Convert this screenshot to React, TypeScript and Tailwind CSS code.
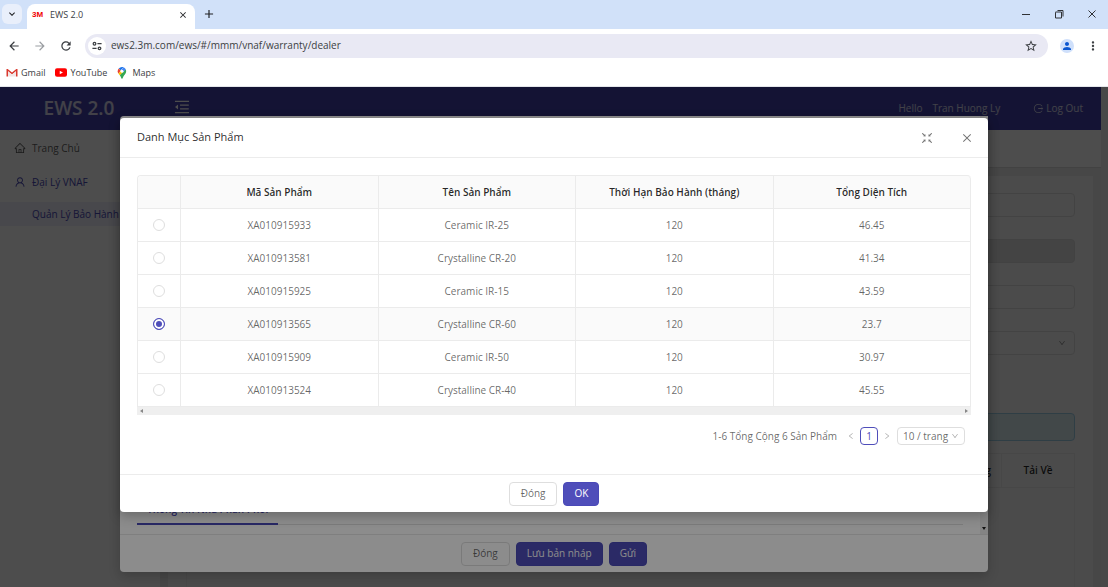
import React from "react";
import {
  AiOutlineHome,
  AiOutlineUser,
  AiOutlineMenuFold,
  AiOutlineLogout,
  AiOutlineClose,
  AiOutlineDown,
  AiOutlineLeft,
  AiOutlineRight,
  AiOutlineFullscreenExit,
} from "react-icons/ai";
import {
  MdArrowBack,
  MdArrowForward,
  MdRefresh,
  MdStarBorder,
  MdMoreVert,
  MdPerson,
  MdClose,
  MdAdd,
  MdKeyboardArrowDown,
} from "react-icons/md";

type Product = {
  code: string;
  name: string;
  months: number;
  area: string;
};

const products: Product[] = [
  { code: "XA010915933", name: "Ceramic IR-25", months: 120, area: "46.45" },
  { code: "XA010913581", name: "Crystalline CR-20", months: 120, area: "41.34" },
  { code: "XA010915925", name: "Ceramic IR-15", months: 120, area: "43.59" },
  { code: "XA010913565", name: "Crystalline CR-60", months: 120, area: "23.7" },
  { code: "XA010915909", name: "Ceramic IR-50", months: 120, area: "30.97" },
  { code: "XA010913524", name: "Crystalline CR-40", months: 120, area: "45.55" },
];

const headers = ["Mã Sản Phẩm", "Tên Sản Phẩm", "Thời Hạn Bảo Hành (tháng)", "Tổng Diện Tích"];

function GmailLogo() {
  return (
    <svg viewBox="0 0 12 9" className="h-[9px] w-3">
      <path d="M.5 8.500V1h1.200L6 4.600 10.300 1h1.200v7.500H10V3.200L6 6.500 2 3.200v5.300Z" fill="#d93a30" />
      <path d="M2 3.200 6 6.500l4-3.300v5.300H2Z" fill="#f1e6e6" />
    </svg>
  );
}

function YouTubeLogo() {
  return (
    <svg viewBox="0 0 24 17" className="h-[9px] w-3">
      <rect width="24" height="17" rx="4" fill="#ff0000" />
      <path d="M9.500 4.800v7.400l6.400-3.700Z" fill="#fff" />
    </svg>
  );
}

function MapsLogo() {
  return (
    <svg viewBox="0 0 20 26" className="h-3 w-2.5">
      <path d="M10 0a9 9 0 0 0-7 3.300L7 7l6.500-6.300A9 9 0 0 0 10 0Z" fill="#1a73e8" />
      <path d="M3 3.300A9 9 0 0 0 2.300 14L7.500 8Z" fill="#ea4335" />
      <path d="M13.500.7 7.500 8l5.300 4.300L18.300 5.500A9 9 0 0 0 13.500.7Z" fill="#4285f4" />
      <path d="M2.300 14c.8 1.700 2 2.800 3 4.100L12.800 12 7.300 8Z" fill="#fbbc04" />
      <path d="M18.300 5.500 5.300 18.100C8 21.300 8.500 26 10 26s2-4.500 4.700-7.900C16.700 15.600 19 13 19 9a9 9 0 0 0-.7-3.500Z" fill="#34a853" />
      <circle cx="10" cy="9" r="3.300" fill="#fff" />
    </svg>
  );
}

function SiteSettingsIcon() {
  return (
    <svg viewBox="0 0 12 12" className="size-2.5" fill="none" stroke="#3c3f43" strokeWidth="1.500">
      <circle cx="3" cy="3.200" r="1.600" />
      <path d="M6.500 3.200H11.500M.5 8.800H5.500" />
      <circle cx="9" cy="8.800" r="1.600" />
    </svg>
  );
}

function BrowserChrome() {
  return (
    <div className="shrink-0 bg-white text-[10px] text-[#3c4043]">
      <div className="flex h-[29px] items-end bg-[#d1e1f9] pl-[2px]">
        <button aria-label="Tìm kiếm thẻ" className="mb-[5px] flex size-5 items-center justify-center rounded-md bg-[#e9effb] text-[#202124]">
          <MdKeyboardArrowDown className="size-3" />
        </button>
        <div className="ml-[5px] flex h-[25px] w-[168px] items-center rounded-t-lg bg-white pr-[7px] pb-[4px] pl-[5px]">
          <span className="w-[18px] font-['Liberation_Sans'] text-[8px] font-bold text-[#f00000]">3M</span>
          <span className="flex-1 text-[9px]">EWS 2.0</span>
          <button aria-label="Đóng thẻ">
            <MdClose className="size-2.5 text-[#202124]" />
          </button>
        </div>
        <button aria-label="Thẻ mới" className="mb-[8px] ml-[7px] text-[#202124]">
          <MdAdd className="size-3.5" />
        </button>
        <div className="mr-[11px] mb-[10px] ml-auto flex items-center gap-[23px] text-[#303236]">
          <button aria-label="Thu nhỏ">
            <svg viewBox="0 0 10 10" className="size-2.5" stroke="currentColor"><path d="M1 5.500H9" /></svg>
          </button>
          <button aria-label="Khôi phục">
            <svg viewBox="0 0 10 10" className="size-2.5" fill="none" stroke="currentColor"><path d="M1.500 3.500V9h6V3H1.500ZM3.500 1.500H9V7.500" /></svg>
          </button>
          <button aria-label="Đóng cửa sổ">
            <svg viewBox="0 0 10 10" className="size-2.5" stroke="currentColor"><path d="m1.500 1.500 7 7m0-7-7 7" /></svg>
          </button>
        </div>
      </div>
      <div className="flex h-[33px] items-center pr-2 pl-[7px] text-[#3c3f43]">
        <button aria-label="Quay lại"><MdArrowBack className="size-3.5" /></button>
        <button aria-label="Tiếp theo" className="ml-3 text-[#9a9da1]"><MdArrowForward className="size-3.5" /></button>
        <button aria-label="Tải lại" className="ml-3"><MdRefresh className="size-3.5" /></button>
        <div className="ml-3 flex h-6 flex-1 items-center rounded-full bg-[#e9e9f4] pr-[10px] pl-[3px]">
          <span className="flex size-[18px] items-center justify-center rounded-full bg-white"><SiteSettingsIcon /></span>
          <input
            aria-label="Địa chỉ"
            defaultValue="ews2.3m.com/ews/#/mmm/vnaf/warranty/dealer"
            className="ml-[5px] flex-1 bg-transparent text-[10px] text-[#3c3f43] outline-none"
          />
          <button aria-label="Đánh dấu trang"><MdStarBorder className="size-3.5" /></button>
        </div>
        <button aria-label="Hồ sơ" className="ml-3 flex size-[14px] items-center justify-center rounded-full bg-[#cfe0fb] text-[#0b57d0]">
          <MdPerson className="size-3" />
        </button>
        <button aria-label="Trình đơn" className="ml-3"><MdMoreVert className="size-3.5" /></button>
      </div>
      <nav className="flex h-[25px] items-center gap-[10px] border-b border-[#e4e6ea] pb-[3px] pl-[6px] text-[9px]">
        <a href="#gmail" className="flex items-center gap-[3px]"><GmailLogo />Gmail</a>
        <a href="#youtube" className="flex items-center gap-[3px]"><YouTubeLogo />YouTube</a>
        <a href="#maps" className="flex items-center gap-[5px]"><MapsLogo />Maps</a>
      </nav>
    </div>
  );
}

function Sidebar() {
  return (
    <nav className="w-40 shrink-0 bg-white text-[10px]">
      <a href="#home" className="flex h-9 items-center gap-[6px] pl-[14px] text-black/65">
        <AiOutlineHome className="size-3" />
        Trang Chủ
      </a>
      <a href="#dealer" className="flex h-8 items-center gap-[6px] pl-[14px] text-[#4a49b8]">
        <AiOutlineUser className="size-3" />
        Đại Lý VNAF
      </a>
      <a href="#warranty" className="mt-1 flex h-6 items-center bg-[#eeeefc] pl-8 text-[#4a49b8]">
        Quản Lý Bảo Hành
      </a>
    </nav>
  );
}

function DealerPage() {
  return (
    <main className="flex min-w-0 flex-1 flex-col bg-[#ebebeb]">
      <div className="h-[38px] shrink-0 border-b border-[#dcdcdc] bg-white" />
      <div className="mx-[8px] mt-2 flex-1 bg-[#fafafa] px-[18px] pt-[17px]">
        <div className="flex flex-col gap-[22px]">
          <input aria-label="Mã đại lý" className="h-6 w-full rounded-sm border border-[#e0e0e0]" />
          <input aria-label="Tên đại lý" disabled className="h-6 w-full rounded-sm border border-[#dcdcdc] bg-[#e4e4e4]" />
          <input aria-label="Địa chỉ đại lý" className="h-6 w-full rounded-sm border border-[#e0e0e0]" />
          <div className="relative">
            <select aria-label="Trạng thái" className="h-6 w-full appearance-none rounded-sm border border-[#e0e0e0]" />
            <AiOutlineDown className="absolute top-2 right-[9px] size-2 text-black/45" />
          </div>
        </div>
        <div className="mt-[57px] h-7 rounded-sm border border-[#9fcfe8] bg-[#dcf0f5]" />
        <table className="mt-3 w-full table-fixed border-collapse text-[10px] text-black/85">
          <thead>
            <tr className="h-[34px]">
              <th className="border border-[#ebebeb]" />
              <th className="w-[96px] border border-[#ebebeb] pr-[10px] text-right font-semibold">Trạng</th>
              <th className="w-[73px] border border-[#ebebeb] font-semibold">Tải Về</th>
            </tr>
          </thead>
          <tbody>
            <tr className="h-40">
              <td colSpan={3} className="border border-[#f0f0f0]" />
            </tr>
          </tbody>
        </table>
      </div>
    </main>
  );
}

function Button({ primary, children }: { primary?: boolean; children: React.ReactNode }) {
  return (
    <button
      className={
        primary
          ? "h-6 rounded-sm border border-[#4a49b8] bg-[#4f4eba] px-[10px] text-[10px] text-white"
          : "h-6 rounded-sm border border-[#dedede] bg-white px-[11px] text-[10px] text-black/60"
      }
    >
      {children}
    </button>
  );
}

function DraftDialog() {
  return (
    <div className="absolute inset-0 bg-black/45 px-30 pt-[29px]">
      <section className="flex h-[456px] flex-col rounded-sm bg-white shadow-[0_4px_12px_rgba(0,0,0,0.2)]">
        <div className="flex min-h-0 flex-1 items-end">
          <div className="mb-[9px] ml-[17px] flex-1 border-b border-[#e0e0e0]">
            <button className="-mb-px border-b-2 border-[#4a49b8] px-[10px] pb-[6px] text-[10px] font-semibold text-[#4a49b8]">
              Thông Tin Nhà Phân Phối
            </button>
          </div>
          <div className="ml-[17px] flex h-full w-2 items-end justify-center bg-[#f1f1f1] pb-1">
            <svg viewBox="0 0 4 3" className="h-[3px] w-1"><path d="M0 0h4L2 3Z" fill="#222" /></svg>
          </div>
        </div>
        <footer className="flex h-[38px] shrink-0 items-center justify-center gap-[6px] border-t border-[#e8e8e8]">
          <Button>Đóng</Button>
          <Button primary>Lưu bản nháp</Button>
          <Button primary>Gửi</Button>
        </footer>
      </section>
    </div>
  );
}

function ProductTable() {
  return (
    <div>
      <table className="w-full table-fixed border-separate border-spacing-0 rounded-t-sm border-t border-l border-[#ebebeb] text-center text-[10px] text-black/60">
        <thead>
          <tr className="h-[33px] bg-[#fafafa] text-black/85">
            <th className="w-[43px] rounded-tl-sm border-r border-b border-[#ebebeb]" />
            {headers.map((h) => (
              <th key={h} className="border-r border-b border-[#ebebeb] font-semibold last:rounded-tr-sm">
                {h}
              </th>
            ))}
          </tr>
        </thead>
        <tbody>
          {products.map((p) => (
            <tr key={p.code} className="h-[33px] has-checked:bg-[#fafafa]">
              <td className="border-r border-b border-[#ebebeb]">
                <input
                  type="radio"
                  name="product"
                  aria-label={p.code}
                  defaultChecked={p.code === "XA010913565"}
                  className="mx-auto block size-3 appearance-none rounded-full border border-[#dedede] bg-white checked:border-[#4f4eba] checked:bg-[#4f4eba] checked:shadow-[inset_0_0_0_2px_white]"
                />
              </td>
              <td className="border-r border-b border-[#ebebeb]">{p.code}</td>
              <td className="border-r border-b border-[#ebebeb]">{p.name}</td>
              <td className="border-r border-b border-[#ebebeb]">{p.months}</td>
              <td className="border-r border-b border-[#ebebeb]">{p.area}</td>
            </tr>
          ))}
        </tbody>
      </table>
      <div className="flex h-2 items-center justify-between bg-[#efefef] px-[3px]">
        <svg viewBox="0 0 3 4" className="h-1 w-[3px]"><path d="M3 0v4L0 2Z" fill="#888" /></svg>
        <svg viewBox="0 0 3 4" className="h-1 w-[3px]"><path d="M0 0v4l3-2Z" fill="#888" /></svg>
      </div>
    </div>
  );
}

function ProductDialog() {
  return (
    <div className="absolute inset-0 bg-black/45 px-30 pt-[31px]">
      <section className="rounded-sm bg-white shadow-[0_4px_12px_rgba(0,0,0,0.25)]">
        <header className="flex h-10 items-center border-b border-[#ececec] pr-[15px] pl-[17px]">
          <h2 className="flex-1 text-[11px] font-medium text-black/85">Danh Mục Sản Phẩm</h2>
          <button aria-label="Toàn màn hình" className="text-black/55"><AiOutlineFullscreenExit className="size-3.5" /></button>
          <button aria-label="Đóng hộp thoại" className="ml-[27px] text-black/55"><AiOutlineClose className="size-3" /></button>
        </header>
        <div className="px-[17px] pt-[17px]">
          <ProductTable />
          <div className="mt-3 flex h-[18px] items-center justify-end pr-[6px] text-[10px] text-black/60">
            <span>1-6 Tổng Cộng 6 Sản Phẩm</span>
            <button aria-label="Trang trước" className="ml-[10px] text-black/35"><AiOutlineLeft className="size-2" /></button>
            <button className="ml-[5px] h-[18px] w-[18px] rounded-sm border border-[#4f4eba] font-medium text-[#4f4eba]">1</button>
            <button aria-label="Trang sau" className="ml-[5px] text-black/35"><AiOutlineRight className="size-2" /></button>
            <div className="relative ml-[6px]">
              <select aria-label="Số dòng mỗi trang" className="block h-[18px] w-[68px] appearance-none rounded-sm border border-[#dedede] pl-[5px] text-[10px]">
                <option>10 / trang</option>
              </select>
              <AiOutlineDown className="pointer-events-none absolute top-[5px] right-[6px] size-2 text-black/35" />
            </div>
          </div>
        </div>
        <footer className="mt-[29px] flex h-[38px] items-center justify-center gap-[6px] border-t border-[#ececec]">
          <Button>Đóng</Button>
          <Button primary>OK</Button>
        </footer>
      </section>
    </div>
  );
}

export default function App() {
  return (
    <div className="flex h-screen flex-col overflow-hidden bg-white font-['Open_Sans','Noto_Sans',sans-serif]">
      <BrowserChrome />
      <div className="relative flex min-h-0 flex-1 overflow-hidden">
        <div className="flex min-w-0 flex-1 flex-col">
          <header className="flex h-[43px] shrink-0 items-center bg-[#4443ae] pr-[18px] text-[10px] text-white/80">
            <h1 className="w-[158px] text-center text-[19px] font-semibold">EWS 2.0</h1>
            <button aria-label="Thu gọn trình đơn" className="mb-1 ml-[15px] text-white"><AiOutlineMenuFold className="size-[18px]" /></button>
            <span className="ml-auto">Hello</span>
            <span className="ml-[10px]">Tran Huong Ly</span>
            <a href="#logout" className="ml-[33px] flex items-center gap-[2px]">
              <AiOutlineLogout className="size-[11px]" />
              Log Out
            </a>
          </header>
          <div className="flex min-h-0 flex-1">
            <Sidebar />
            <DealerPage />
          </div>
        </div>
        <div className="w-[7px] bg-[#f1f1f1]" />
        <DraftDialog />
        <ProductDialog />
      </div>
    </div>
  );
}
